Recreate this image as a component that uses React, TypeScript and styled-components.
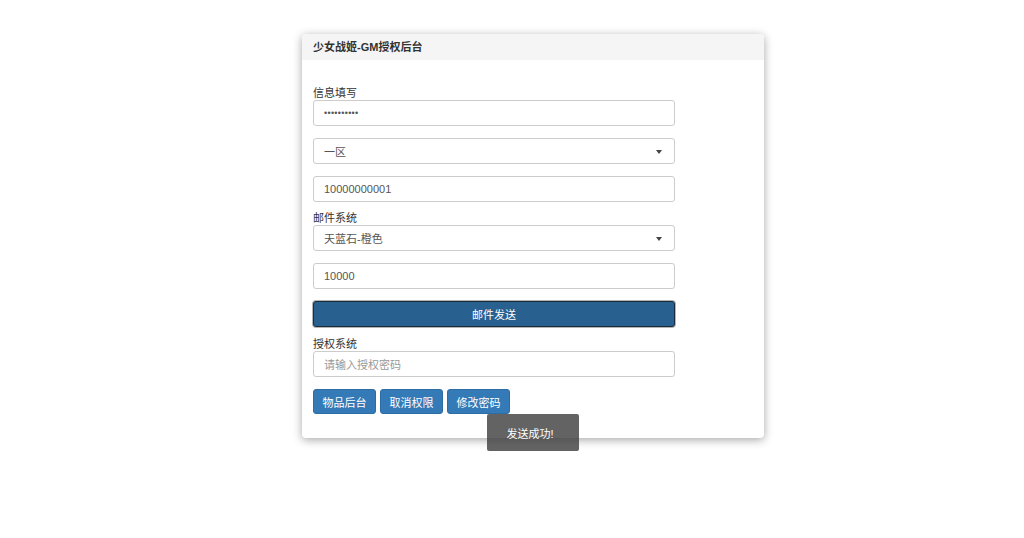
import React from 'react';
import styled, { createGlobalStyle } from 'styled-components';

const GlobalStyle = createGlobalStyle`
    html, body {
        margin: 0;
        padding: 0;
        background: #fff;
        font-family: "Liberation Sans", "Noto Sans CJK SC", sans-serif;
        font-size: 11px;
        color: #333;
    }
`;

const Page = styled.div`
    width: 1024px;
    height: 538px;
    padding: 34px 0 0 302px;
    box-sizing: border-box;
`;

const Panel = styled.div`
    position: relative;
    width: 462px;
    background: #fff;
    border-radius: 4px;
    box-shadow: 0 2px 10px rgba(0, 0, 0, 0.35);
`;

const PanelHeading = styled.div`
    height: 26px;
    line-height: 27px;
    padding: 0 11px;
    background: #f5f5f5;
    border-radius: 4px 4px 0 0;
    font-weight: bold;
    font-size: 11px;
    color: #333;
`;

const PanelBody = styled.div`
    padding: 26px 11px 24px;
`;

const Form = styled.div`
    width: 362px;
    display: flex;
    flex-direction: column;
`;

const Label = styled.div`
    height: 14px;
    line-height: 15px;
    font-size: 11px;
    color: #333;
`;

const Field = styled.div<{ $gap?: number; $placeholder?: boolean }>`
    position: relative;
    height: 26px;
    box-sizing: border-box;
    border: 1px solid #ccc;
    border-radius: 3px;
    padding: 0 10px;
    display: flex;
    align-items: center;
    color: ${(p: any): string => (p.$placeholder ? '#999' : '#555')};
    margin-bottom: ${(p: any): number => p.$gap ?? 12}px;
    font-size: 11px;
`;

const Caret = styled.span`
    position: absolute;
    right: 12px;
    top: 11px;
    width: 0;
    height: 0;
    border-left: 3.5px solid transparent;
    border-right: 3.5px solid transparent;
    border-top: 4px solid #444;
`;

const Dots = styled.span`
    letter-spacing: 0.3px;
    font-size: 9px;
    color: #555;
`;

const SendButton = styled.div`
    height: 26px;
    box-sizing: border-box;
    background: #286090;
    border: 1px solid #1c2b3a;
    box-shadow: 0 0 0 1px #b5b5b5;
    border-radius: 3px;
    color: #fff;
    display: flex;
    align-items: center;
    justify-content: center;
    margin-bottom: 10px;
`;

const ButtonRow = styled.div`
    display: flex;
    gap: 4px;
`;

const Button = styled.div`
    height: 25px;
    box-sizing: border-box;
    padding: 0 8.5px;
    background: #337ab7;
    border: 1px solid #2e6da4;
    border-radius: 3px;
    color: #fff;
    display: flex;
    align-items: center;
`;

const Toast = styled.div`
    position: absolute;
    left: 185px;
    top: 380px;
    width: 92px;
    height: 37px;
    padding-right: 6px;
    box-sizing: border-box;
    background: rgba(60, 60, 60, 0.8);
    color: #fff;
    font-size: 11px;
    display: flex;
    align-items: center;
    justify-content: center;
    border-radius: 2px;
`;

const App = (): JSX.Element => (
    <>
        <GlobalStyle />
        <Page>
            <Panel>
                <PanelHeading>少女战姬-GM授权后台</PanelHeading>
                <PanelBody>
                    <Form>
                        <Label>信息填写</Label>
                        <Field><Dots>••••••••••</Dots></Field>
                        <Field>一区<Caret /></Field>
                        <Field $gap={9}>10000000001</Field>
                        <Label>邮件系统</Label>
                        <Field>天蓝石-橙色<Caret /></Field>
                        <Field>10000</Field>
                        <SendButton>邮件发送</SendButton>
                        <Label>授权系统</Label>
                        <Field $placeholder>请输入授权密码</Field>
                        <ButtonRow>
                            <Button>物品后台</Button>
                            <Button>取消权限</Button>
                            <Button>修改密码</Button>
                        </ButtonRow>
                    </Form>
                </PanelBody>
                <Toast>发送成功!</Toast>
            </Panel>
        </Page>
    </>
);

export default App;
